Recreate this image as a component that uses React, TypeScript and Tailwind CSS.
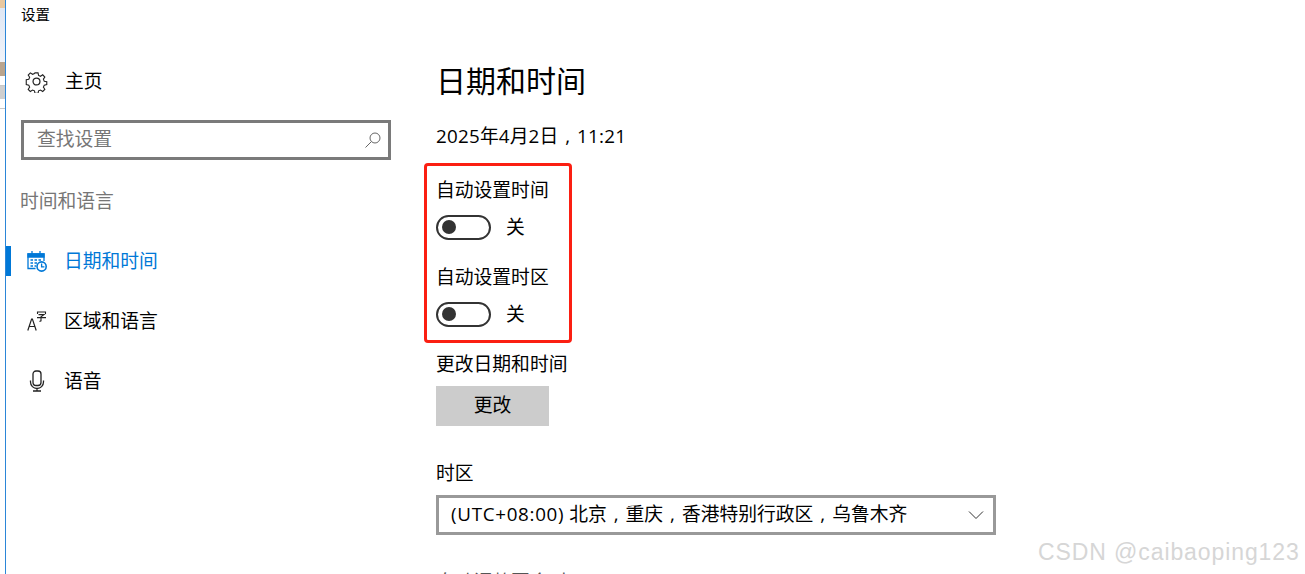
import React from "react";

const font = { fontFamily: '"Open Sans","Noto Sans CJK SC",sans-serif' };

function Comma() {
  return <span className="inline-block w-[1em] text-center">,</span>;
}

function Toggle() {
  return (
    <div className="flex items-center h-[26px]">
      <div className="w-[55px] h-[25px] rounded-full border-[2px] border-[#333333] flex items-center pl-[4px]">
        <div className="w-[14px] h-[14px] rounded-full bg-[#333333]" />
      </div>
      <span className="ml-[15px] text-[18.8px] text-black leading-[26px]">关</span>
    </div>
  );
}

function NavItem({ icon, label, active }: { icon: React.ReactNode; label: string; active?: boolean }) {
  return (
    <div className="flex items-center h-[30px]">
      <div className={active ? "w-[5px] h-[30px] bg-[#0078d7]" : "w-[5px] h-[30px]"} />
      <div className="w-[16px]" />
      <div className="w-[37px] flex items-center">{icon}</div>
      <span className={active ? "text-[18.8px] text-[#0078d7]" : "text-[18.8px] text-black"}>{label}</span>
    </div>
  );
}

export default function App() {
  return (
    <div className="w-[1305px] h-[574px] bg-white overflow-hidden flex relative text-black" style={font}>
      <div className="w-[5px] h-full flex flex-col bg-white shrink-0">
        <div className="h-[8px] bg-[#e8c8a0]" />
        <div className="h-[54px] bg-gradient-to-b from-[#dfe7f4] to-[#f0f3f9]" />
        <div className="h-[14px] bg-[#b9a58f]" />
        <div className="h-[9px] bg-white" />
        <div className="h-[1px] bg-[#c8c8c8]" />
        <div className="h-[13px] bg-[#cfcfcf]" />
        <div className="h-[9px] bg-white" />
        <div className="h-[1px] bg-[#c8c8c8]" />
      </div>
      <div className="w-[1px] h-full bg-[#2b86d8] shrink-0" />
      <div className="w-[424px] shrink-0 flex flex-col [&>*]:shrink-0">
        <div className="pl-[15px] h-[31px] flex items-center text-[14.5px] leading-none">设置</div>
        <div className="h-[30px]" />
        <div className="flex items-center h-[40px] pl-[19px]">
          <svg width="23" height="23" viewBox="0 0 24 24" fill="none" stroke="#222" strokeWidth="1.3">
            <circle cx="12" cy="12" r="3.6" />
            <path d="M10.2 1.8h3.6l.6 3 2.3 1 2.6-1.7 2.5 2.6-1.7 2.5 1 2.4 3 .6v3.5l-3 .6-1 2.3 1.7 2.6-2.5 2.5-2.6-1.7-2.3 1-.6 3h-3.6l-.6-3-2.3-1-2.6 1.7-2.5-2.5 1.7-2.6-1-2.3-3-.6V9.9l3-.6 1-2.4-1.7-2.5 2.5-2.6 2.6 1.7 2.3-1z" transform="translate(1.4 1.4) scale(.885)" />
          </svg>
          <span className="ml-[17px] text-[18.8px]">主页</span>
        </div>
        <div className="h-[19px]" />
        <div className="ml-[15px] w-[370px] h-[40px] border-[3px] border-[#7a7a7a] flex items-center pl-[13px] pr-[6px]">
          <span className="flex-1 text-[18.8px] leading-[30px] -mt-[3px] text-[#767676]">查找设置</span>
          <svg width="18" height="18" viewBox="0 0 18 18" fill="none" stroke="#666" strokeWidth="1">
            <circle cx="11" cy="7" r="5" />
            <path d="M7.4 10.6L1.5 16.5" />
          </svg>
        </div>
        <div className="h-[26px]" />
        <div className="pl-[14px] h-[30px] flex items-center text-[18.8px] text-[#767676]">时间和语言</div>
        <div className="h-[30px]" />
        <NavItem
          active
          label="日期和时间"
          icon={
            <svg width="20" height="23" viewBox="0 0 20 23" fill="none" stroke="#0078d7" strokeWidth="1.3">
              <path d="M8.5 18.5H1V4h16v7" />
              <path d="M1 4h16v3H1z" fill="#0078d7" />
              <path d="M5 1v3.5M13 1v3.5" />
              <path d="M3.5 10h2.5M7.5 10h2.5M11.5 10h2.5M3.5 13h2.5M7.5 13h2.5M3.5 16h2.5M7.5 16h1.5" strokeWidth="1.3" />
              <circle cx="14.6" cy="16.5" r="4.6" fill="#fff" strokeWidth="1.6" />
              <path d="M14.6 13.6v3.2h2.8" />
            </svg>
          }
        />
        <div className="h-[30px]" />
        <NavItem
          label="区域和语言"
          icon={
            <svg width="20" height="20" viewBox="0 0 20 20" fill="none" stroke="#222" strokeWidth="1.2">
              <path d="M.8 19.5L4.6 8h.8l3.8 11.5M2.2 15.5h5.6" />
              <path d="M10.5 3V1h8v2M11.5 3.6h5.5l-3 2.2v4l-1.5.7M10 6.6h9" strokeWidth="1.1" />
            </svg>
          }
        />
        <div className="h-[30px]" />
        <NavItem
          label="语音"
          icon={
            <svg width="20" height="22" viewBox="0 0 20 22" fill="none" stroke="#222" strokeWidth="1.3">
              <rect x="6" y="1" width="8" height="14.5" rx="3" />
              <path d="M3.5 10.5v1.5a6.5 6.5 0 0 0 13 0v-1.5M10 18.5v2.5M6 21h8" />
            </svg>
          }
        />
      </div>
      <div className="flex-1 flex flex-col pl-[6px] [&>*]:shrink-0">
        <div className="h-[62px]" />
        <div className="text-[30px] leading-[38px] h-[38px]">日期和时间</div>
        <div className="h-[22px]" />
        <div className="text-[18.8px] leading-[28px] h-[28px]"><span className="tracking-[0.25px]">2025</span>年<span className="tracking-[0.25px]">4</span>月<span className="tracking-[0.25px]">2</span>日<Comma /><span className="tracking-[0.25px]">11:21</span></div>
        <div className="h-[13px]" />
        <div className="-ml-[12px] w-[148px] h-[180px] border-[3px] border-[#fb1f12] rounded-[4px] pl-[9px] flex flex-col [&>*]:shrink-0">
          <div className="h-[11px]" />
          <div className="text-[18.8px] leading-[26px] h-[26px] whitespace-nowrap">自动设置时间</div>
          <div className="h-[11px]" />
          <Toggle />
          <div className="h-[24px]" />
          <div className="text-[18.8px] leading-[26px] h-[26px] whitespace-nowrap">自动设置时区</div>
          <div className="h-[11px]" />
          <Toggle />
        </div>
        <div className="h-[8px]" />
        <div className="text-[18.8px] leading-[26px] h-[26px]">更改日期和时间</div>
        <div className="h-[9px]" />
        <div className="w-[113px] h-[40px] bg-[#cccccc] flex items-center justify-center pb-[2px] text-[18.8px]">更改</div>
        <div className="h-[34px]" />
        <div className="text-[18.8px] leading-[26px] h-[26px]">时区</div>
        <div className="h-[9px]" />
        <div className="w-[560px] h-[40px] border-[3px] border-[#999999] flex items-center pl-[12px] pr-[9px]">
          <span className="flex-1 text-[18.8px] pb-[2px] whitespace-nowrap"><span className="tracking-[0.7px]">(UTC+08:00)</span> 北京<Comma />重庆<Comma />香港特别行政区<Comma />乌鲁木齐</span>
          <svg width="16" height="10" viewBox="0 0 16 10" fill="none" stroke="#333" strokeWidth="1">
            <path d="M1 1.5L8 8.5L15 1.5" />
          </svg>
        </div>
        <div className="h-[34px]" />
        <div className="text-[18.8px] leading-[26px] h-[26px] text-[#555555]">自动调整夏令时</div>
      </div>
      <div className="absolute left-[1038px] top-[537px] text-[23px] leading-[30px] tracking-[0.9px] text-[#d6d6d6] whitespace-nowrap font-['Liberation_Sans']">
        CSDN @caibaoping123
      </div>
    </div>
  );
}
